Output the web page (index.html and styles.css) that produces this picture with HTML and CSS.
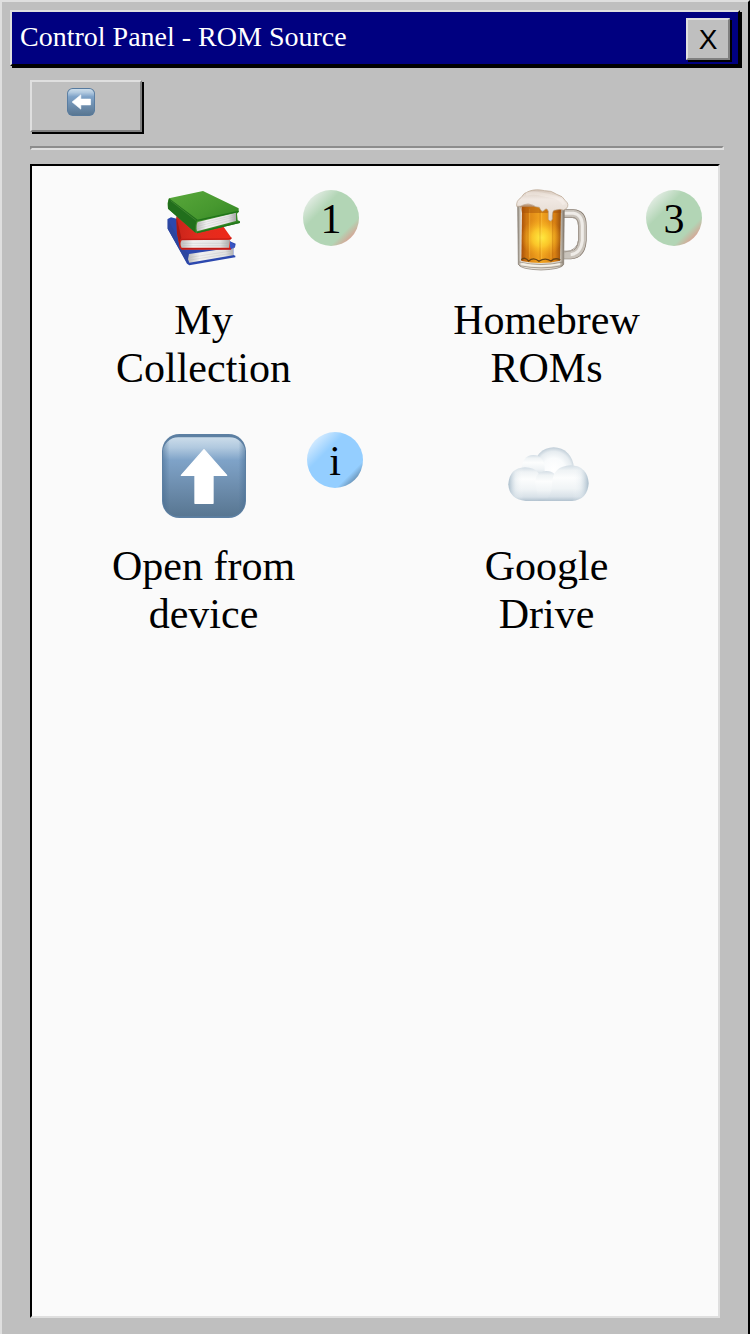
FILE: index.html
```html
<!DOCTYPE html>
<html lang="en">
<head>
<meta charset="utf-8">
<meta name="viewport" content="width=device-width, initial-scale=1">
<title>Control Panel - ROM Source</title>
<link rel="stylesheet" href="styles.css">
</head>
<body>
<main class="window">
  <header class="titlebar">
    <h1 class="title">Control Panel - ROM Source</h1>
    <button class="close" type="button" aria-label="Close">X</button>
  </header>
  <div class="content">
    <nav class="toolbar">
      <button class="back" type="button" aria-label="Back">
        <svg class="back-icon" viewBox="0 0 252 252" aria-hidden="true">
          <defs>
            <linearGradient id="key" x1="0" y1="0" x2="0" y2="1">
              <stop offset="0" stop-color="#cbdcea"/><stop offset=".13" stop-color="#b1c9df"/><stop offset=".29" stop-color="#7fa3c8"/><stop offset=".65" stop-color="#6c8cac"/><stop offset="1" stop-color="#587691"/>
            </linearGradient>
          </defs>
          <rect width="252" height="252" rx="52" fill="#567a9f"/>
          <rect x="8" y="10" width="236" height="236" rx="44" fill="url(#key)"/>
          <path d="M46 126 124 62V100H212V152H124V190Z" fill="#fff" stroke="#fff" stroke-width="6" stroke-linejoin="round"/>
        </svg>
      </button>
    </nav>
    <hr class="divider">
    <ul class="panel">
      <li class="source">
        <button class="source-button" type="button">
          <svg class="icon" viewBox="21 24 252 252" aria-hidden="true">
            <defs>
              <linearGradient id="green" x1="0" y1="0" x2="1" y2="1"><stop offset="0" stop-color="#59a83b"/><stop offset=".5" stop-color="#47982f"/><stop offset="1" stop-color="#287d1e"/></linearGradient>
              <linearGradient id="red" x1="0" y1="0" x2="1" y2="0"><stop offset="0" stop-color="#c9241a"/><stop offset=".4" stop-color="#e02c1e"/><stop offset="1" stop-color="#ee281a"/></linearGradient>
              <linearGradient id="pages" x1="0" y1="0" x2="1" y2="0"><stop offset="0" stop-color="#bbb"/><stop offset=".25" stop-color="#f1f1f1"/><stop offset=".8" stop-color="#e2e2e2"/><stop offset="1" stop-color="#a9a9a9"/></linearGradient>
            </defs>
            <path d="M38 117 48 112 68 117 242 191 240 202 235 206V225L241 227V232L103 256 96 251 38 146Z" fill="#2c48ae"/>
            <path d="M38 117 77 187 84 207 101 222 97 250 38 146Z" fill="#2c469f"/>
            <path d="M102 222 239 202 234 208V226L103 248 99 238Z" fill="url(#pages)"/>
            <path d="M84 208 227 209 240 200 239 195 225 184Z" fill="#3854c4"/>
            <path d="M64 109 75 110 204 138 230 175 225 181V201L228 209H80L74 203 66 160Z" fill="url(#red)"/>
            <path d="M64 109 79 173 74 184 76 205 66 160Z" fill="#a91a13"/>
            <path d="M80 181 225 179 222 203H80Q73 192 80 181Z" fill="url(#pages)"/>
            <path d="M78 178 220 177 230 174M79 206H227" fill="none" stroke="#bd1812" stroke-width="3"/>
            <path d="M42 55 144 33 251 85 251 96 246 101 248 121 255 124V129L126 160 119 156 39 86Q36 66 42 55Z" fill="url(#green)"/>
            <path d="M42 55 128 119Q119 130 122 159L39 86Q37 67 42 55Z" fill="#216f1c"/>
            <path d="M47 62 124 122" stroke="#51933b" stroke-width="3" opacity=".6"/>
            <path d="M128 126 243 98V123L126 154Q122 138 128 126Z" fill="url(#pages)"/>
            <path d="M129 132 239 105M128 139 241 110M128 146 241 117M84 190H218M84 197H218M106 232 229 213M106 240 229 220" fill="none" stroke="#aaa" stroke-width="1" opacity=".7"/>
            <path d="M127 121 251 94M126 158 253 127" fill="none" stroke="#20741b" stroke-width="4"/>
          </svg>
          <span class="label">My Collection</span>
        </button>
        <span class="badge">1</span>
      </li>
      <li class="source">
        <button class="source-button" type="button">
          <svg class="icon" viewBox="13 24 252 252" aria-hidden="true">
            <defs>
              <linearGradient id="beer" x1="0" y1="0" x2="1" y2="0"><stop offset="0" stop-color="#a95009"/><stop offset=".18" stop-color="#dc8515"/><stop offset=".5" stop-color="#f2a51f"/><stop offset=".85" stop-color="#d67e12"/><stop offset="1" stop-color="#99500d"/></linearGradient>
              <radialGradient id="glow"><stop offset="0" stop-color="#ffed41"/><stop offset=".45" stop-color="#ffd12d" stop-opacity=".8"/><stop offset="1" stop-color="#f5a51d" stop-opacity="0"/></radialGradient>
              <linearGradient id="glass" x1="0" y1="0" x2="1" y2="0"><stop offset="0" stop-color="#8b8275"/><stop offset=".08" stop-color="#eeeae3"/><stop offset=".9" stop-color="#d9d2c7"/><stop offset="1" stop-color="#7c7164"/></linearGradient>
              <linearGradient id="foam" x1="0" y1="0" x2="0" y2="1"><stop offset="0" stop-color="#d5c6b9"/><stop offset=".3" stop-color="#f0e8e2"/><stop offset="1" stop-color="#e3d8ce"/></linearGradient>
            </defs>
            <path d="M189 101H217Q245 102 245 137V181Q242 223 210 225H190" fill="none" stroke="#85796d" stroke-width="26"/>
            <path d="M189 101H217Q245 102 245 137V181Q242 223 210 225H190" fill="none" stroke="#c9c3bb" stroke-width="22"/>
            <path d="M190 100H218Q246 104 245 140V182Q240 221 210 224" fill="none" stroke="#efece8" stroke-width="9"/>
            <path d="M190 112H212Q234 112 234 140V180Q230 212 192 216" fill="none" stroke="#a49b91" stroke-width="3"/>
            <path d="M51 78H191L189 253Q184 268 121 270 59 268 53 253Z" fill="url(#glass)" stroke="#83796c" stroke-width="2"/>
            <path d="M64 80H181L178 242Q122 256 62 243Z" fill="url(#beer)"/>
            <ellipse cx="122" cy="173" rx="62" ry="60" fill="url(#glow)"/>
            <path d="M82 82V238M118 86V243M156 83V238" stroke="#9f4c08" stroke-width="3" opacity=".25"/>
            <path d="M87 87V233M123 87V240M151 84V235" stroke="#ffce59" stroke-width="2" opacity=".5"/>
            <path d="M62 239Q72 229 84 243 99 230 115 244 133 231 151 243 164 231 179 240" fill="none" stroke="#6b4413" stroke-width="4"/>
            <path d="M56 246Q121 261 187 246M56 257Q121 270 186 257" fill="none" stroke="#8a7f70" stroke-width="2"/>
            <path d="M65 252Q121 264 178 252" fill="none" stroke="#f7f3e8" stroke-width="4"/>
            <path d="M58 79Q70 68 88 72 108 84 122 82 139 87 156 89 174 93 182 82V99H64Z" fill="#a14e08" opacity=".45"/>
            <path d="M48 79Q46 62 61 53 68 38 87 33 106 26 132 32 153 31 168 43 187 48 194 62 207 73 198 85 190 94 178 88L160 91Q154 95 155 117 150 129 143 118V94Q139 82 131 90 124 101 116 82 105 82 96 75 82 69 70 74 59 81 48 79Z" fill="url(#foam)" stroke="#b7a18d" stroke-width="2"/>
            <path d="M76 42Q101 37 119 42 143 46 163 51 184 59 190 74" fill="none" stroke="#fffaf5" stroke-width="10" opacity=".3"/>
          </svg>
          <span class="label">Homebrew ROMs</span>
        </button>
        <span class="badge">3</span>
      </li>
      <li class="source">
        <button class="source-button" type="button">
          <svg class="icon" viewBox="0 0 252 252" aria-hidden="true">
            <defs>
              <linearGradient id="edge" x1="0" y1="0" x2="1" y2="0"><stop offset="0" stop-color="#456b91" stop-opacity=".5"/><stop offset=".08" stop-color="#456b91" stop-opacity="0"/><stop offset=".92" stop-color="#456b91" stop-opacity="0"/><stop offset="1" stop-color="#456b91" stop-opacity=".5"/></linearGradient>
            </defs>
            <rect width="252" height="252" rx="52" fill="#5c7fa2"/>
            <rect x="3" y="10" width="246" height="237" rx="46" fill="url(#key)"/>
            <rect x="3" y="10" width="246" height="237" rx="46" fill="url(#edge)"/>
            <path d="M126 47 194 124H153V208H99V124H58Z" fill="#fff" stroke="#fff" stroke-width="4" stroke-linejoin="round"/>
          </svg>
          <span class="label">Open from device</span>
        </button>
        <button class="badge badge-info" type="button" aria-label="Information">i</button>
      </li>
      <li class="source">
        <button class="source-button" type="button">
          <svg class="icon" viewBox="28 -3 252 252" aria-hidden="true">
            <defs>
              <radialGradient id="puff" cx=".5" cy=".55" r=".56"><stop offset="0" stop-color="#fff"/><stop offset=".5" stop-color="#f9fbfc"/><stop offset=".8" stop-color="#e6ecf0"/><stop offset="1" stop-color="#bccad5"/></radialGradient>
              <linearGradient id="front" x1="0" y1="0" x2="0" y2="1"><stop offset="0" stop-color="#d3dde5"/><stop offset=".14" stop-color="#eff3f5"/><stop offset=".35" stop-color="#fcfdfd"/><stop offset=".65" stop-color="#f0f4f6"/><stop offset=".88" stop-color="#d8e1e8"/><stop offset="1" stop-color="#b2c2cf"/></linearGradient>
              <linearGradient id="left-edge" x1="0" y1="0" x2="1" y2="0"><stop offset="0" stop-color="#aabdcb"/><stop offset=".25" stop-color="#d5e0e8" stop-opacity=".3"/><stop offset=".5" stop-color="#fff" stop-opacity="0"/></linearGradient>
              <linearGradient id="right-edge" x1="1" y1="0" x2="0" y2="0"><stop offset="0" stop-color="#aabdcb"/><stop offset=".25" stop-color="#d5e0e8" stop-opacity=".3"/><stop offset=".5" stop-color="#fff" stop-opacity="0"/></linearGradient>
            </defs>
            <ellipse cx="174" cy="97" rx="60" ry="60" fill="url(#puff)"/>
            <path d="M78 105Q79 61 113 60 131 60 141 75 151 94 145 125H85Z" fill="url(#front)"/>
            <path d="M38 148Q41 99 88 97 115 97 130 116 172 147 172 198H90Q40 192 38 148Z" fill="url(#front)"/>
            <path d="M38 148Q41 99 88 97 115 97 130 116V198H90Q40 192 38 148Z" fill="url(#left-edge)"/>
            <path d="M119 145Q118 111 151 108 182 107 190 145L184 197H128Z" fill="url(#front)"/>
            <path d="M169 145Q172 93 225 91 275 93 279 144 276 194 229 198H145Q170 184 169 145Z" fill="url(#front)"/>
            <path d="M180 93H225Q275 93 279 144 276 194 229 198H180Z" fill="url(#right-edge)"/>
          </svg>
          <span class="label">Google Drive</span>
        </button>
      </li>
    </ul>
  </div>
</main>
</body>
</html>
```
FILE: styles.css
```css
* {
  box-sizing: border-box;
}

body {
  margin: 0;
  font-family: "Liberation Serif", "Times New Roman", serif;
  color: #000;
  background: #bfbfbf;
}

button {
  margin: 0;
  padding: 0;
  border: 0;
  color: inherit;
  font: inherit;
  background: none;
  cursor: pointer;
}

.window {
  display: flex;
  flex-direction: column;
  min-height: 100vh;
  padding: 8px 8px 16px;
  border: solid;
  border-width: 2px 2px 0;
  border-color: #dfdfdf #000 #000 #dfdfdf;
}

.titlebar {
  display: flex;
  justify-content: space-between;
  align-items: flex-start;
  height: 56px;
  padding: 6px 8px;
  border: 2px solid;
  border-color: #dfdfdf #000 #000 #dfdfdf;
  background: #000080;
  box-shadow: 2px 2px 0 #000;
}

.title {
  margin: 0;
  color: #fff;
  font-size: 28px;
  font-weight: 400;
  line-height: 38px;
}

.close,
.back {
  border: 2px solid;
  border-color: #dfdfdf #808080 #808080 #dfdfdf;
  background: #bfbfbf;
  box-shadow: 2px 2px 0 #000;
}

.close {
  width: 44px;
  height: 42px;
  font-family: "Liberation Sans", Arial, sans-serif;
  font-size: 28px;
  line-height: 40px;
}

.content {
  flex: 1;
  display: flex;
  flex-direction: column;
  padding: 14px 20px 0;
}

.toolbar {
  display: flex;
}

.back {
  display: flex;
  width: 112px;
  height: 52px;
  padding: 6px 35px;
}

.back-icon {
  width: 28px;
  height: 28px;
}

.divider {
  width: auto;
  height: 4px;
  margin: 14px -4px 14px 0;
  border: 2px solid;
  border-color: #8c8c8c #dfdfdf #dfdfdf #8c8c8c;
}

.panel {
  flex: 1;
  display: grid;
  grid-template-columns: repeat(2, 1fr);
  align-content: start;
  row-gap: 42px;
  margin: 0;
  padding: 22px 0;
  list-style: none;
  border: 2px solid;
  border-color: #000 #dfdfdf #dfdfdf #000;
  background: #fafafa;
}

.source {
  position: relative;
  display: flex;
  justify-content: center;
}

.source-button {
  display: flex;
  flex-direction: column;
  align-items: center;
  gap: 24px;
  width: 200px;
}

.icon {
  width: 84px;
  height: 84px;
}

.label {
  font-size: 42px;
  line-height: 48px;
}

.badge {
  position: absolute;
  top: 2px;
  right: 16px;
  width: 56px;
  height: 56px;
  border-radius: 50%;
  font-size: 42px;
  line-height: 58px;
  text-align: center;
  background: linear-gradient(135deg, #e0ebe1 14%, #b2d5b5 35%, #b2d5b5 74%, #d6a595 86%);
}

.badge-info {
  top: -2px;
  right: 12px;
  background: linear-gradient(135deg, #d2eaff 14%, #94ceff 35%, #94ceff 76%, #6a94b8 86%);
}
```
